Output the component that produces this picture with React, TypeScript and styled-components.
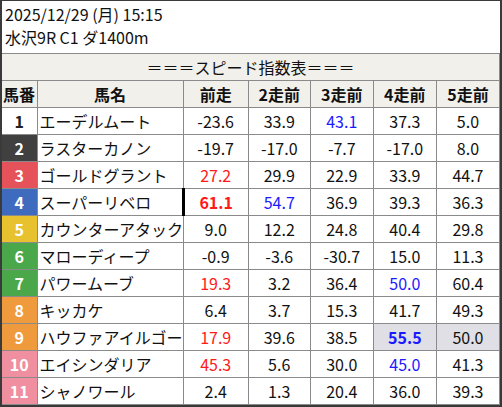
import React from 'react';
import styled, {createGlobalStyle} from 'styled-components';

type Tone = 'red' | 'blue' | undefined;
type Score = {v: string; tone?: Tone; bold?: boolean; mark?: boolean; shade?: boolean};
type Horse = {no: number; name: string; bg: string; fg: string; scores: Score[]};

const s = (v: string, extra: Partial<Score> = {}): Score => ({v, ...extra});

const horses: Horse[] = [
  {no: 1, name: 'エーデルムート', bg: '#ffffff', fg: '#222', scores: [s('-23.6'), s('33.9'), s('43.1', {tone: 'blue'}), s('37.3'), s('5.0')]},
  {no: 2, name: 'ラスターカノン', bg: '#404040', fg: '#fff', scores: [s('-19.7'), s('-17.0'), s('-7.7'), s('-17.0'), s('8.0')]},
  {no: 3, name: 'ゴールドグラント', bg: '#e5525a', fg: '#fff', scores: [s('27.2', {tone: 'red'}), s('29.9'), s('22.9'), s('33.9'), s('44.7')]},
  {no: 4, name: 'スーパーリベロ', bg: '#3f6bbf', fg: '#fff', scores: [s('61.1', {tone: 'red', bold: true, mark: true}), s('54.7', {tone: 'blue'}), s('36.9'), s('39.3'), s('36.3')]},
  {no: 5, name: 'カウンターアタック', bg: '#e8c22e', fg: '#fff', scores: [s('9.0'), s('12.2'), s('24.8'), s('40.4'), s('29.8')]},
  {no: 6, name: 'マローディープ', bg: '#4aa84a', fg: '#fff', scores: [s('-0.9'), s('-3.6'), s('-30.7'), s('15.0'), s('11.3')]},
  {no: 7, name: 'パワームーブ', bg: '#4aa84a', fg: '#fff', scores: [s('19.3', {tone: 'red'}), s('3.2'), s('36.4'), s('50.0', {tone: 'blue'}), s('60.4')]},
  {no: 8, name: 'キッカケ', bg: '#ef9a3c', fg: '#fff', scores: [s('6.4'), s('3.7'), s('15.3'), s('41.7'), s('49.3')]},
  {no: 9, name: 'ハウファアイルゴー', bg: '#ef9a3c', fg: '#fff', scores: [s('17.9', {tone: 'red'}), s('39.6'), s('38.5'), s('55.5', {tone: 'blue', bold: true, shade: true}), s('50.0', {shade: true})]},
  {no: 10, name: 'エイシンダリア', bg: '#ef8fa0', fg: '#fff', scores: [s('45.3', {tone: 'red'}), s('5.6'), s('30.0'), s('45.0', {tone: 'blue'}), s('41.3')]},
  {no: 11, name: 'シャノワール', bg: '#ef8fa0', fg: '#fff', scores: [s('2.4'), s('1.3'), s('20.4'), s('36.0'), s('39.3')]},
];

const heads = ['前走', '2走前', '3走前', '4走前', '5走前'];
const widths = [35, 146, 65, 62, 63, 63, 63];

const Global = createGlobalStyle`
  html, body {
    margin: 0;
    background: #fff;
  }
  body {
    font-family: "Noto Sans CJK JP", "Noto Sans", sans-serif;
    color: #111;
  }
`;

const Frame = styled.div`
  box-sizing: border-box;
  width: 502px;
  height: 407px;
  border: 2px solid #3a3a3a;
  border-top-width: 1px;
  overflow: hidden;
`;

const Info = styled.div`
  padding: 2px 0 4px 3px;
  font-size: 16px;
  line-height: 23px;
`;

const Table = styled.table`
  width: 498px;
  table-layout: fixed;
  border-collapse: collapse;
  font-size: 16px;
`;

const TitleCell = styled.td`
  height: 26px;
  padding: 0;
  border: 1px solid #8a8a8a;
  border-left: none;
  background: #f2f0eb;
  text-align: center;
  line-height: 24px;
`;

const Head = styled.th`
  height: 26px;
  padding: 0;
  border: 1px solid #8a8a8a;
  background: #f2f0eb;
  font-weight: bold;
  text-align: center;
  &:first-child {
    border-left: none;
    text-align: left;
    padding-left: 1px;
  }
`;

const Row = styled.tr`
  height: 27px;
`;

const NoCell = styled.td<{$bg: string; $fg: string}>`
  padding: 0;
  border: 1px solid #8a8a8a;
  border-left: none;
  background: ${p => p.$bg};
  color: ${p => p.$fg};
  font-weight: bold;
  text-align: center;
`;

const NameCell = styled.td`
  padding: 0 0 0 2px;
  border: 1px solid #8a8a8a;
  white-space: nowrap;
  overflow: hidden;
`;

const toneColor = {red: '#ff1a1a', blue: '#1a1aff'};

const ScoreCell = styled.td<{$tone?: Tone; $bold?: boolean; $mark?: boolean; $shade?: boolean}>`
  padding: 0;
  border: 1px solid #8a8a8a;
  ${p => p.$mark && 'border-left: 3px solid #000;'}
  background: ${p => (p.$shade ? '#dfdfe5' : '#fff')};
  color: ${p => (p.$tone ? toneColor[p.$tone] : '#111')};
  font-weight: ${p => (p.$bold ? 'bold' : 'normal')};
  text-align: center;
`;

export default function App() {
  return (
    <>
      <Global/>
      <Frame>
        <Info>
          <div>2025/12/29 (月) 15:15</div>
          <div>水沢9R C1 ダ1400m</div>
        </Info>
        <Table>
          <colgroup>
            {widths.map((w, i) => <col key={i} style={{width: w}}/>)}
          </colgroup>
          <tbody>
            <tr>
              <TitleCell colSpan={7}>＝＝＝スピード指数表＝＝＝</TitleCell>
            </tr>
            <tr>
              <Head>馬番</Head>
              <Head>馬名</Head>
              {heads.map(h => <Head key={h}>{h}</Head>)}
            </tr>
            {horses.map(h => (
              <Row key={h.no}>
                <NoCell $bg={h.bg} $fg={h.fg}>{h.no}</NoCell>
                <NameCell>{h.name}</NameCell>
                {h.scores.map((sc, i) => (
                  <ScoreCell key={i} $tone={sc.tone} $bold={sc.bold} $mark={sc.mark} $shade={sc.shade}>
                    {sc.v}
                  </ScoreCell>
                ))}
              </Row>
            ))}
          </tbody>
        </Table>
      </Frame>
    </>
  );
}
